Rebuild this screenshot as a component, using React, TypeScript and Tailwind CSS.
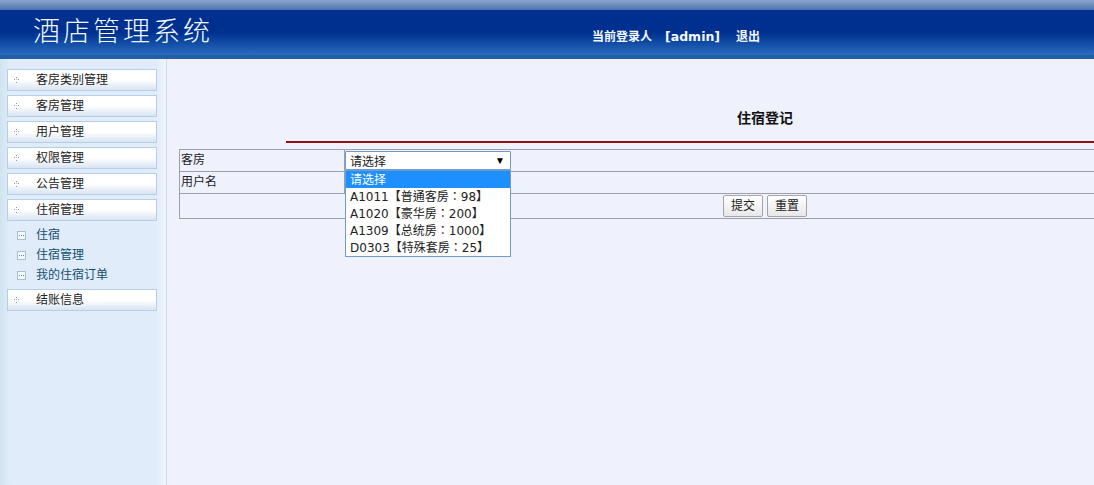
const font = { fontFamily: '"Liberation Sans", "Noto Sans CJK SC", sans-serif' };
const verdanaCjk = { fontFamily: '"DejaVu Sans", "Noto Sans CJK TC", sans-serif' };

const MenuBtn = ({ label }: { label: string }) => (
  <div className="h-[22px] w-[150px] flex items-center border border-[#b5d0e6] bg-gradient-to-b from-white via-white to-[#d8e4f2] text-[12px] text-[#222]">
    <svg width="8" height="8" viewBox="0 0 8 8" className="ml-[5px] mr-[15px] shrink-0 ">
      <rect x="3" y="1" width="1" height="1" fill="#7a9cb8" />
      <rect x="3" y="6" width="1" height="1" fill="#7a9cb8" />
      <rect x="1" y="3" width="1" height="1" fill="#7a9cb8" />
      <rect x="5" y="3" width="1" height="1" fill="#7a9cb8" />
      <rect x="3" y="3" width="1" height="1" fill="#b0c6d8" />
    </svg>
    <span>{label}</span>
  </div>
);

const SubItem = ({ label }: { label: string }) => (
  <div className="h-[20px] flex items-center text-[12px] text-[#14506f]">
    <svg width="9" height="9" viewBox="0 0 9 9" className="ml-[10px] mr-[11px] shrink-0">
      <rect x="0.5" y="0.5" width="8" height="8" fill="#f4f8fc" stroke="#a9bfd2" />
      <rect x="2" y="4" width="1" height="1" fill="#6f8aa0" />
      <rect x="4" y="4" width="1" height="1" fill="#6f8aa0" />
      <rect x="6" y="4" width="1" height="1" fill="#6f8aa0" />
    </svg>
    <span className="-ml-[1px]">{label}</span>
  </div>
);

const options = ["A1011【普通客房：98】", "A1020【豪华房：200】", "A1309【总统房：1000】", "D0303【特殊套房：25】"];

export default function App() {
  return (
    <div style={font} className="w-[1094px] h-[485px] overflow-hidden bg-[#eff2fd] flex flex-col">
      <header className="h-[59px] shrink-0 flex flex-col">
        <div className="h-[10px] bg-gradient-to-b from-[#8ba3cb] to-[#4f74b0]" />
        <div className="h-[45px] flex items-start bg-gradient-to-b from-[#00308f] via-[#00308f] to-[#2a6cbe]">
          <h1 className="ml-[33px] mt-[1px] w-[559px] text-[27px] leading-[38px] tracking-[3px] text-[#f2f8ff]" style={{ fontFamily: '"Noto Sans CJK SC", serif', fontWeight: 300 }}>
            酒店管理系统
          </h1>
          <div className="mt-[18px] text-[12px] leading-[18px] font-bold text-[#f4f7ff] flex">
            <span>当前登录人</span>
            <span className="ml-[13px] text-[12.5px]" style={verdanaCjk}>[admin]</span>
            <span className="ml-[16px]">退出</span>
          </div>
        </div>
        <div className="h-[4px] bg-[#235ea8]" />
      </header>

      <div className="flex flex-1 min-h-0">
        <aside className="w-[167px] shrink-0 border-r border-[#d5d8e5] bg-[linear-gradient(90deg,#d0e4f0_0%,#e0ecfa_6%,#e0ecfa_94%,#f0f5fc_100%)] pl-[7px] pt-[10px]">
          <div className="flex flex-col gap-[4px]">
            <MenuBtn label="客房类别管理" />
            <MenuBtn label="客房管理" />
            <MenuBtn label="用户管理" />
            <MenuBtn label="权限管理" />
            <MenuBtn label="公告管理" />
            <MenuBtn label="住宿管理" />
          </div>
          <div className="pt-[4px] pb-[4px]">
            <SubItem label="住宿" />
            <SubItem label="住宿管理" />
            <SubItem label="我的住宿订单" />
          </div>
          <MenuBtn label="结账信息" />
        </aside>

        <main className="flex-1 min-w-0 pl-[12px]">
          <h2 className="w-[1172px] mt-[50px] h-[18px] text-center text-[14px] leading-[18px] font-bold text-[#111]">住宿登记</h2>
          <div className="ml-[107px] mt-[14px] w-[900px] h-[2px] bg-[#8f0f14]" />
          <div className="relative mt-[6px] w-[1000px] border-t border-l border-[#9a9fab] text-[12px] text-[#222]">
            <div className="flex h-[22px] border-b border-[#9a9fab]">
              <div className="w-[165px] border-r border-[#9a9fab] pl-[1px] leading-[21px]">客房</div>
            </div>
            <div className="flex h-[22px] border-b border-[#9a9fab]">
              <div className="w-[165px] border-r border-[#9a9fab] pl-[1px] leading-[21px]">用户名</div>
            </div>
            <div className="flex h-[25px] border-b border-[#9a9fab] pt-[1px] pl-[543px] gap-[4px]">
              <button className="w-[40px] h-[22px] border border-[#a5a5a5] rounded-[2px] bg-gradient-to-b from-white to-[#e8e8e8] text-[12px] text-[#222]">提交</button>
              <button className="w-[40px] h-[22px] border border-[#a5a5a5] rounded-[2px] bg-gradient-to-b from-white to-[#e8e8e8] text-[12px] text-[#222]">重置</button>
            </div>

            <div className="absolute left-[165px] top-[1px] w-[166px] z-10">
              <div className="h-[19px] border border-[#6f9bd1] rounded-[1px] bg-white flex items-center justify-between pl-[4px] pr-[5px] text-[12px] leading-[19px] text-[#222]">
                <span className="pt-[3px]">请选择</span>
                <span className="text-[10px] text-black">▼</span>
              </div>
              <div className="border border-[#6f9bd1] bg-white text-[#222]">
                <div className="bg-[#1e8fff] text-white pl-[4px] h-[17px] leading-[18px] text-[12px]">请选择</div>
                {options.map((o) => (
                  <div key={o} style={verdanaCjk} className="pl-[4px] h-[17px] leading-[18px] whitespace-nowrap text-[12px]">{o}</div>
                ))}
              </div>
            </div>
          </div>
        </main>
      </div>
    </div>
  );
}
